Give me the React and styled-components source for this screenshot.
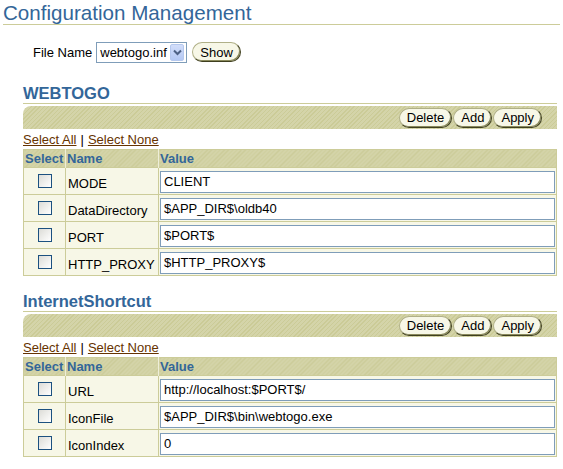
import React from 'react'
import styled, { createGlobalStyle } from 'styled-components'

const GlobalStyle = createGlobalStyle`
  body {
    margin: 0;
    background: #ffffff;
    font-family: "Liberation Sans", Arial, sans-serif;
    font-size: 13px;
    color: #000;
  }
`

const hatch = `repeating-linear-gradient(135deg, #cbcb97 0px, #cbcb97 1px, #d4d4a9 1px, #d4d4a9 3px)`

const sections = [
  {
    title: 'WEBTOGO',
    rows: [
      { name: 'MODE', value: 'CLIENT' },
      { name: 'DataDirectory', value: '$APP_DIR$\\oldb40' },
      { name: 'PORT', value: '$PORT$' },
      { name: 'HTTP_PROXY', value: '$HTTP_PROXY$' },
    ],
  },
  {
    title: 'InternetShortcut',
    rows: [
      { name: 'URL', value: 'http://localhost:$PORT$/' },
      { name: 'IconFile', value: '$APP_DIR$\\bin\\webtogo.exe' },
      { name: 'IconIndex', value: '0' },
    ],
  },
]

const App = () => {
  return (
    <Page>
      <GlobalStyle />
      <Title>Configuration Management</Title>
      <FileRow>
        <Label>File Name</Label>
        <FakeSelect>
          <span>webtogo.inf</span>
          <ArrowBox>
            <svg width="9" height="7" viewBox="0 0 9 7">
              <path d="M1 1.5 L4.5 5 L8 1.5" fill="none" stroke="#4d6185" strokeWidth="2" />
            </svg>
          </ArrowBox>
        </FakeSelect>
        <PillButton>Show</PillButton>
      </FileRow>
      {sections.map((s) => (
        <Section key={s.title}>
          <Heading>{s.title}</Heading>
          <Bar>
            <PillButton>Delete</PillButton>
            <PillButton>Add</PillButton>
            <PillButton>Apply</PillButton>
          </Bar>
          <SelectLinks>
            <a href="#">Select All</a>
            <Pipe>|</Pipe>
            <a href="#">Select None</a>
          </SelectLinks>
          <Table>
            <colgroup>
              <col style={{ width: 42 }} />
              <col style={{ width: 93 }} />
              <col />
            </colgroup>
            <thead>
              <tr>
                <Th>Select</Th>
                <Th>Name</Th>
                <Th>Value</Th>
              </tr>
            </thead>
            <tbody>
              {s.rows.map((r) => (
                <tr key={r.name}>
                  <CheckCell>
                    <CheckBox />
                  </CheckCell>
                  <NameCell>{r.name}</NameCell>
                  <ValueCell>
                    <TextBox>{r.value}</TextBox>
                  </ValueCell>
                </tr>
              ))}
            </tbody>
          </Table>
        </Section>
      ))}
    </Page>
  )
}

const Page = styled.div`
  padding: 0 3px 10px 3px;
`
const Title = styled.h1`
  margin: 0;
  padding-top: 1px;
  font-size: 20.6px;
  line-height: 23px;
  font-weight: normal;
  color: #336699;
  border-bottom: 1px solid #cccc99;
`
const FileRow = styled.div`
  display: flex;
  align-items: center;
  margin-top: 16px;
  padding-left: 30px;
  height: 22px;
`
const Label = styled.span`
  font-size: 13px;
  margin-right: 4px;
`
const FakeSelect = styled.div`
  width: 91px;
  height: 21px;
  box-sizing: border-box;
  border: 1px solid #7f9db9;
  display: flex;
  align-items: center;
  justify-content: space-between;
  padding: 1px 2px 1px 3px;
  background: #fff;
  font-size: 13px;
  margin-right: 5px;
`
const ArrowBox = styled.div`
  width: 14px;
  height: 17px;
  box-sizing: border-box;
  border: 1px solid #b5c8ee;
  border-radius: 2px;
  background: linear-gradient(#d2defa, #b4c8f4);
  display: flex;
  align-items: center;
  justify-content: center;
`
const PillButton = styled.div`
  height: 20px;
  box-sizing: border-box;
  padding: 0 7px;
  display: flex;
  align-items: center;
  font-size: 13px;
  background: #f7f7e7;
  border: 1px solid;
  border-color: #b0b088 #3f3f1f #3f3f1f #b0b088;
  border-radius: 10px;
  box-shadow: inset -1px -1px 0 #8a8a5c;
`
const Section = styled.div`
  margin: 21px 3px 0 20px;
  & + & {
    margin-top: 16px;
  }
`
const Heading = styled.h2`
  margin: 0;
  font-size: 16.5px;
  line-height: 19px;
  font-weight: bold;
  color: #336699;
  border-bottom: 1px solid #cccc99;
`
const Bar = styled.div`
  margin-top: 2px;
  height: 23px;
  background: ${hatch};
  border-top-left-radius: 8px;
  display: flex;
  align-items: center;
  justify-content: flex-end;
  gap: 1px;
  padding-right: 15px;
`
const SelectLinks = styled.div`
  margin-top: 3px;
  line-height: 16px;
  height: 17px;
  font-size: 13px;
  a {
    color: #663300;
  }
`
const Pipe = styled.span`
  margin: 0 4px;
  color: #000;
`
const Table = styled.table`
  width: 100%;
  border-collapse: collapse;
  table-layout: fixed;
  border: 1px solid #cccc99;
`
const Th = styled.th`
  background: ${hatch};
  color: #336699;
  font-size: 13px;
  font-weight: bold;
  text-align: left;
  height: 17px;
  padding: 0 0 0 1px;
  border-left: 1px solid #eeeed8;
  &:first-child {
    border-left: 1px solid #cccc99;
  }
`
const Cell = styled.td`
  background: #f7f7e7;
  border: 1px solid #cccc99;
  height: 27px;
  padding: 0;
  box-sizing: border-box;
`
const CheckCell = styled(Cell)`
  text-align: center;
  vertical-align: middle;
  padding-top: 3px;
`
const NameCell = styled(Cell)`
  font-size: 13px;
  padding: 4px 0 0 2px;
  white-space: nowrap;
`
const ValueCell = styled(Cell)`
  padding: 1px 1px 0 1px;
`
const CheckBox = styled.span`
  display: inline-block;
  width: 14px;
  height: 14px;
  box-sizing: border-box;
  border: 1px solid #1c5180;
  background: linear-gradient(135deg, #dcdcd7, #ffffff);
`
const TextBox = styled.div`
  height: 22px;
  box-sizing: border-box;
  border: 1px solid #7f9db9;
  background: #fff;
  font-size: 13px;
  line-height: 20px;
  padding: 0 3px;
  white-space: nowrap;
  overflow: hidden;
`

export default App
